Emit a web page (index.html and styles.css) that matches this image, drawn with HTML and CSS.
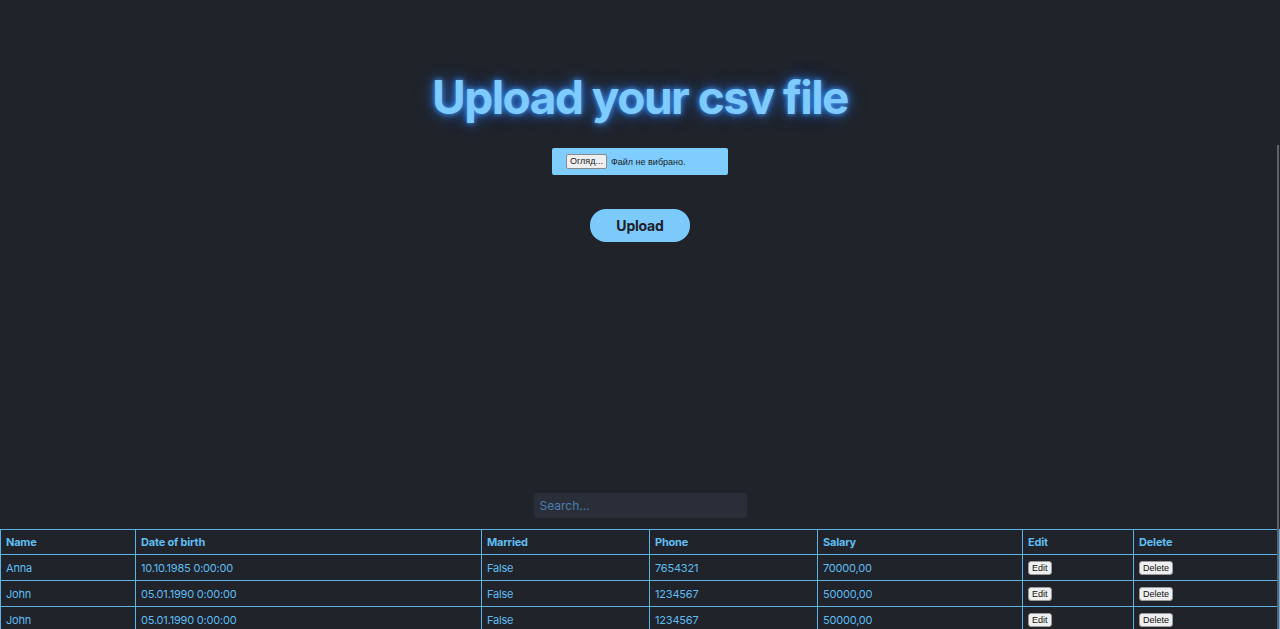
FILE: index.html
```html
<!DOCTYPE html>
<html lang="uk">
<head>
<meta charset="utf-8">
<title>Upload CSV</title>
<link rel="stylesheet" href="styles.css">
</head>
<body>
<main class="page">
  <section class="upload">
    <h1 class="title">Upload your csv file</h1>
    <form class="upload-form">
      <div class="file-box">
        <span class="file-btn">Огляд...</span>
        <span class="file-name">Файл не вибрано.</span>
      </div>
      <button type="button" class="upload-btn">Upload</button>
    </form>
  </section>
  <div class="search-wrap">
    <input class="search" type="text" placeholder="Search...">
  </div>
  <table class="data">
    <thead>
      <tr><th>Name</th><th>Date of birth</th><th>Married</th><th>Phone</th><th>Salary</th><th>Edit</th><th>Delete</th></tr>
    </thead>
    <tbody>
      <tr><td>Anna</td><td>10.10.1985 0:00:00</td><td>False</td><td>7654321</td><td>70000,00</td><td><button class="mini">Edit</button></td><td><button class="mini">Delete</button></td></tr>
      <tr><td>John</td><td>05.01.1990 0:00:00</td><td>False</td><td>1234567</td><td>50000,00</td><td><button class="mini">Edit</button></td><td><button class="mini">Delete</button></td></tr>
      <tr><td>John</td><td>05.01.1990 0:00:00</td><td>False</td><td>1234567</td><td>50000,00</td><td><button class="mini">Edit</button></td><td><button class="mini">Delete</button></td></tr>
    </tbody>
  </table>
</main>
<div class="scroll-thumb"></div>
</body>
</html>
```
FILE: styles.css
```css
html, body {
  margin: 0;
  padding: 0;
  background: #20232a;
  height: 100%;
  overflow: hidden;
}
body {
  font-family: Inter, "Noto Sans", sans-serif;
  color: #61bff3;
}
.page {
  display: flex;
  flex-direction: column;
  align-items: stretch;
}
.upload {
  display: flex;
  flex-direction: column;
  align-items: center;
  padding-top: 69px;
}
.title {
  margin: 0;
  font-size: 46px;
  line-height: 56px;
  font-weight: 700;
  letter-spacing: -1.5px;
  color: #7ecbff;
  text-shadow: 0 0 5px rgba(70, 160, 255, 0.9), 0 0 12px rgba(40, 130, 255, 0.7), 0 0 20px rgba(40, 120, 255, 0.4);
}
.upload-form {
  display: flex;
  flex-direction: column;
  align-items: center;
  margin-top: 23px;
}
.file-box {
  width: 176px;
  height: 27px;
  box-sizing: border-box;
  background: #7fcdff;
  border-radius: 2px;
  display: flex;
  align-items: center;
  gap: 4px;
  padding-left: 14px;
  font-family: "Liberation Sans", Arial, sans-serif;
  font-size: 9px;
  color: #1c1c1c;
}
.file-btn {
  background: #efefef;
  border: 1px solid #8a8a8a;
  border-radius: 2px;
  height: 15px;
  box-sizing: border-box;
  padding: 0 3px;
  line-height: 13px;
}
.upload-btn {
  margin-top: 34px;
  width: 100px;
  height: 33px;
  border: none;
  border-radius: 16px;
  background: #7cc9fc;
  color: #1d2027;
  font-family: Inter, sans-serif;
  font-weight: 700;
  font-size: 14px;
  letter-spacing: -0.2px;
  cursor: pointer;
}
.search-wrap {
  display: flex;
  justify-content: center;
  margin-top: 251px;
}
.search {
  width: 213px;
  height: 25px;
  box-sizing: border-box;
  border: none;
  border-radius: 4px;
  background: #2a2e38;
  padding: 0 6px;
  font-family: Inter, sans-serif;
  font-size: 12px;
  color: #6aa6d8;
  outline: none;
}
.search::placeholder {
  color: #4a7eae;
}
.data {
  margin-top: 11px;
  width: 100%;
  border-collapse: collapse;
  table-layout: fixed;
  font-size: 11px;
  letter-spacing: -0.2px;
}
.data th, .data td {
  box-sizing: border-box;
  border: 1px solid #5cb3e6;
  height: 26px;
  padding: 0 5px;
  text-align: left;
  color: #5fbdf2;
  white-space: nowrap;
}
.data th {
  height: 25px;
  font-weight: 700;
}
.data th:nth-child(1) { width: 135px; }
.data th:nth-child(2) { width: 346px; }
.data th:nth-child(3) { width: 168px; }
.data th:nth-child(4) { width: 168px; }
.data th:nth-child(5) { width: 205px; }
.data th:nth-child(6) { width: 111px; }
.mini {
  font-family: "Liberation Sans", Arial, sans-serif;
  font-size: 9px;
  height: 14px;
  padding: 0 3px;
  background: #efefef;
  border: 1px solid #9a9a9a;
  border-radius: 3px;
  color: #111;
  line-height: 12px;
  vertical-align: middle;
}
.scroll-thumb {
  position: fixed;
  right: 1px;
  top: 145px;
  bottom: 0;
  width: 2px;
  background: #5e626a;
}
```
